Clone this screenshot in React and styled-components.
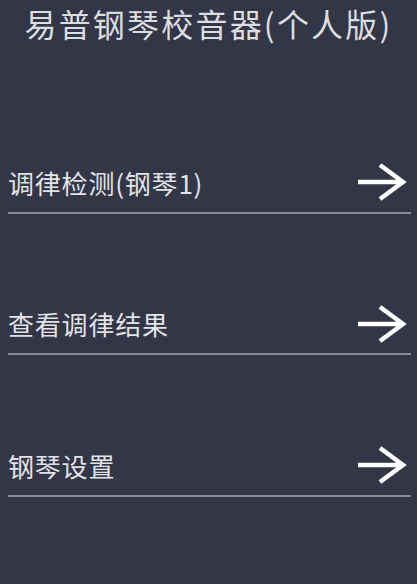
import React from "react";
import styled, { createGlobalStyle } from "styled-components";

const Global = createGlobalStyle`
  html, body { margin: 0; padding: 0; background: #323646; }
  body { font-family: "Noto Sans CJK SC", "Noto Sans", sans-serif; }
`;

const Page = styled.div`
  width: 417px;
  height: 584px;
  background: #323646;
  display: flex;
  flex-direction: column;
  overflow: hidden;
`;

const Title = styled.h1`
  margin: 0;
  height: 72px;
  padding-top: 1px;
  box-sizing: border-box;
  font-size: 32px;
  font-weight: 400;
  letter-spacing: 2.2px;
  color: #dcdde0;
  text-align: center;
  line-height: 44px;
`;

const Menu = styled.div`
  display: flex;
  flex-direction: column;
  padding: 0 6px 0 8px;
`;

const Item = styled.div`
  height: 141.5px;
  box-sizing: border-box;
  display: flex;
  flex-direction: column;
  justify-content: flex-end;
  border-bottom: 2px solid #8a8c95;
  cursor: pointer;
`;

const Row = styled.div`
  height: 57px;
  display: flex;
  align-items: center;
  justify-content: space-between;
  padding-bottom: 1px;
`;

const Label = styled.span`
  font-size: 26px;
  letter-spacing: 0.8px;
  color: #e2e3e6;
`;

const Arrow = () => (
  <svg width="50" height="38" viewBox="0 0 50 38" style={{ marginRight: 4 }}>
    <path d="M1 19 H45 M23 2 L46 19 L23 36" fill="none" stroke="#ffffff" strokeWidth="4.5" />
  </svg>
);

const items = ["调律检测(钢琴1)", "查看调律结果", "钢琴设置"];

export default function App() {
  return (
    <Page>
      <Global />
      <Title>易普钢琴校音器(个人版)</Title>
      <Menu>
        {items.map((t) => (
          <Item key={t}>
            <Row>
              <Label>{t}</Label>
              <Arrow />
            </Row>
          </Item>
        ))}
      </Menu>
    </Page>
  );
}
